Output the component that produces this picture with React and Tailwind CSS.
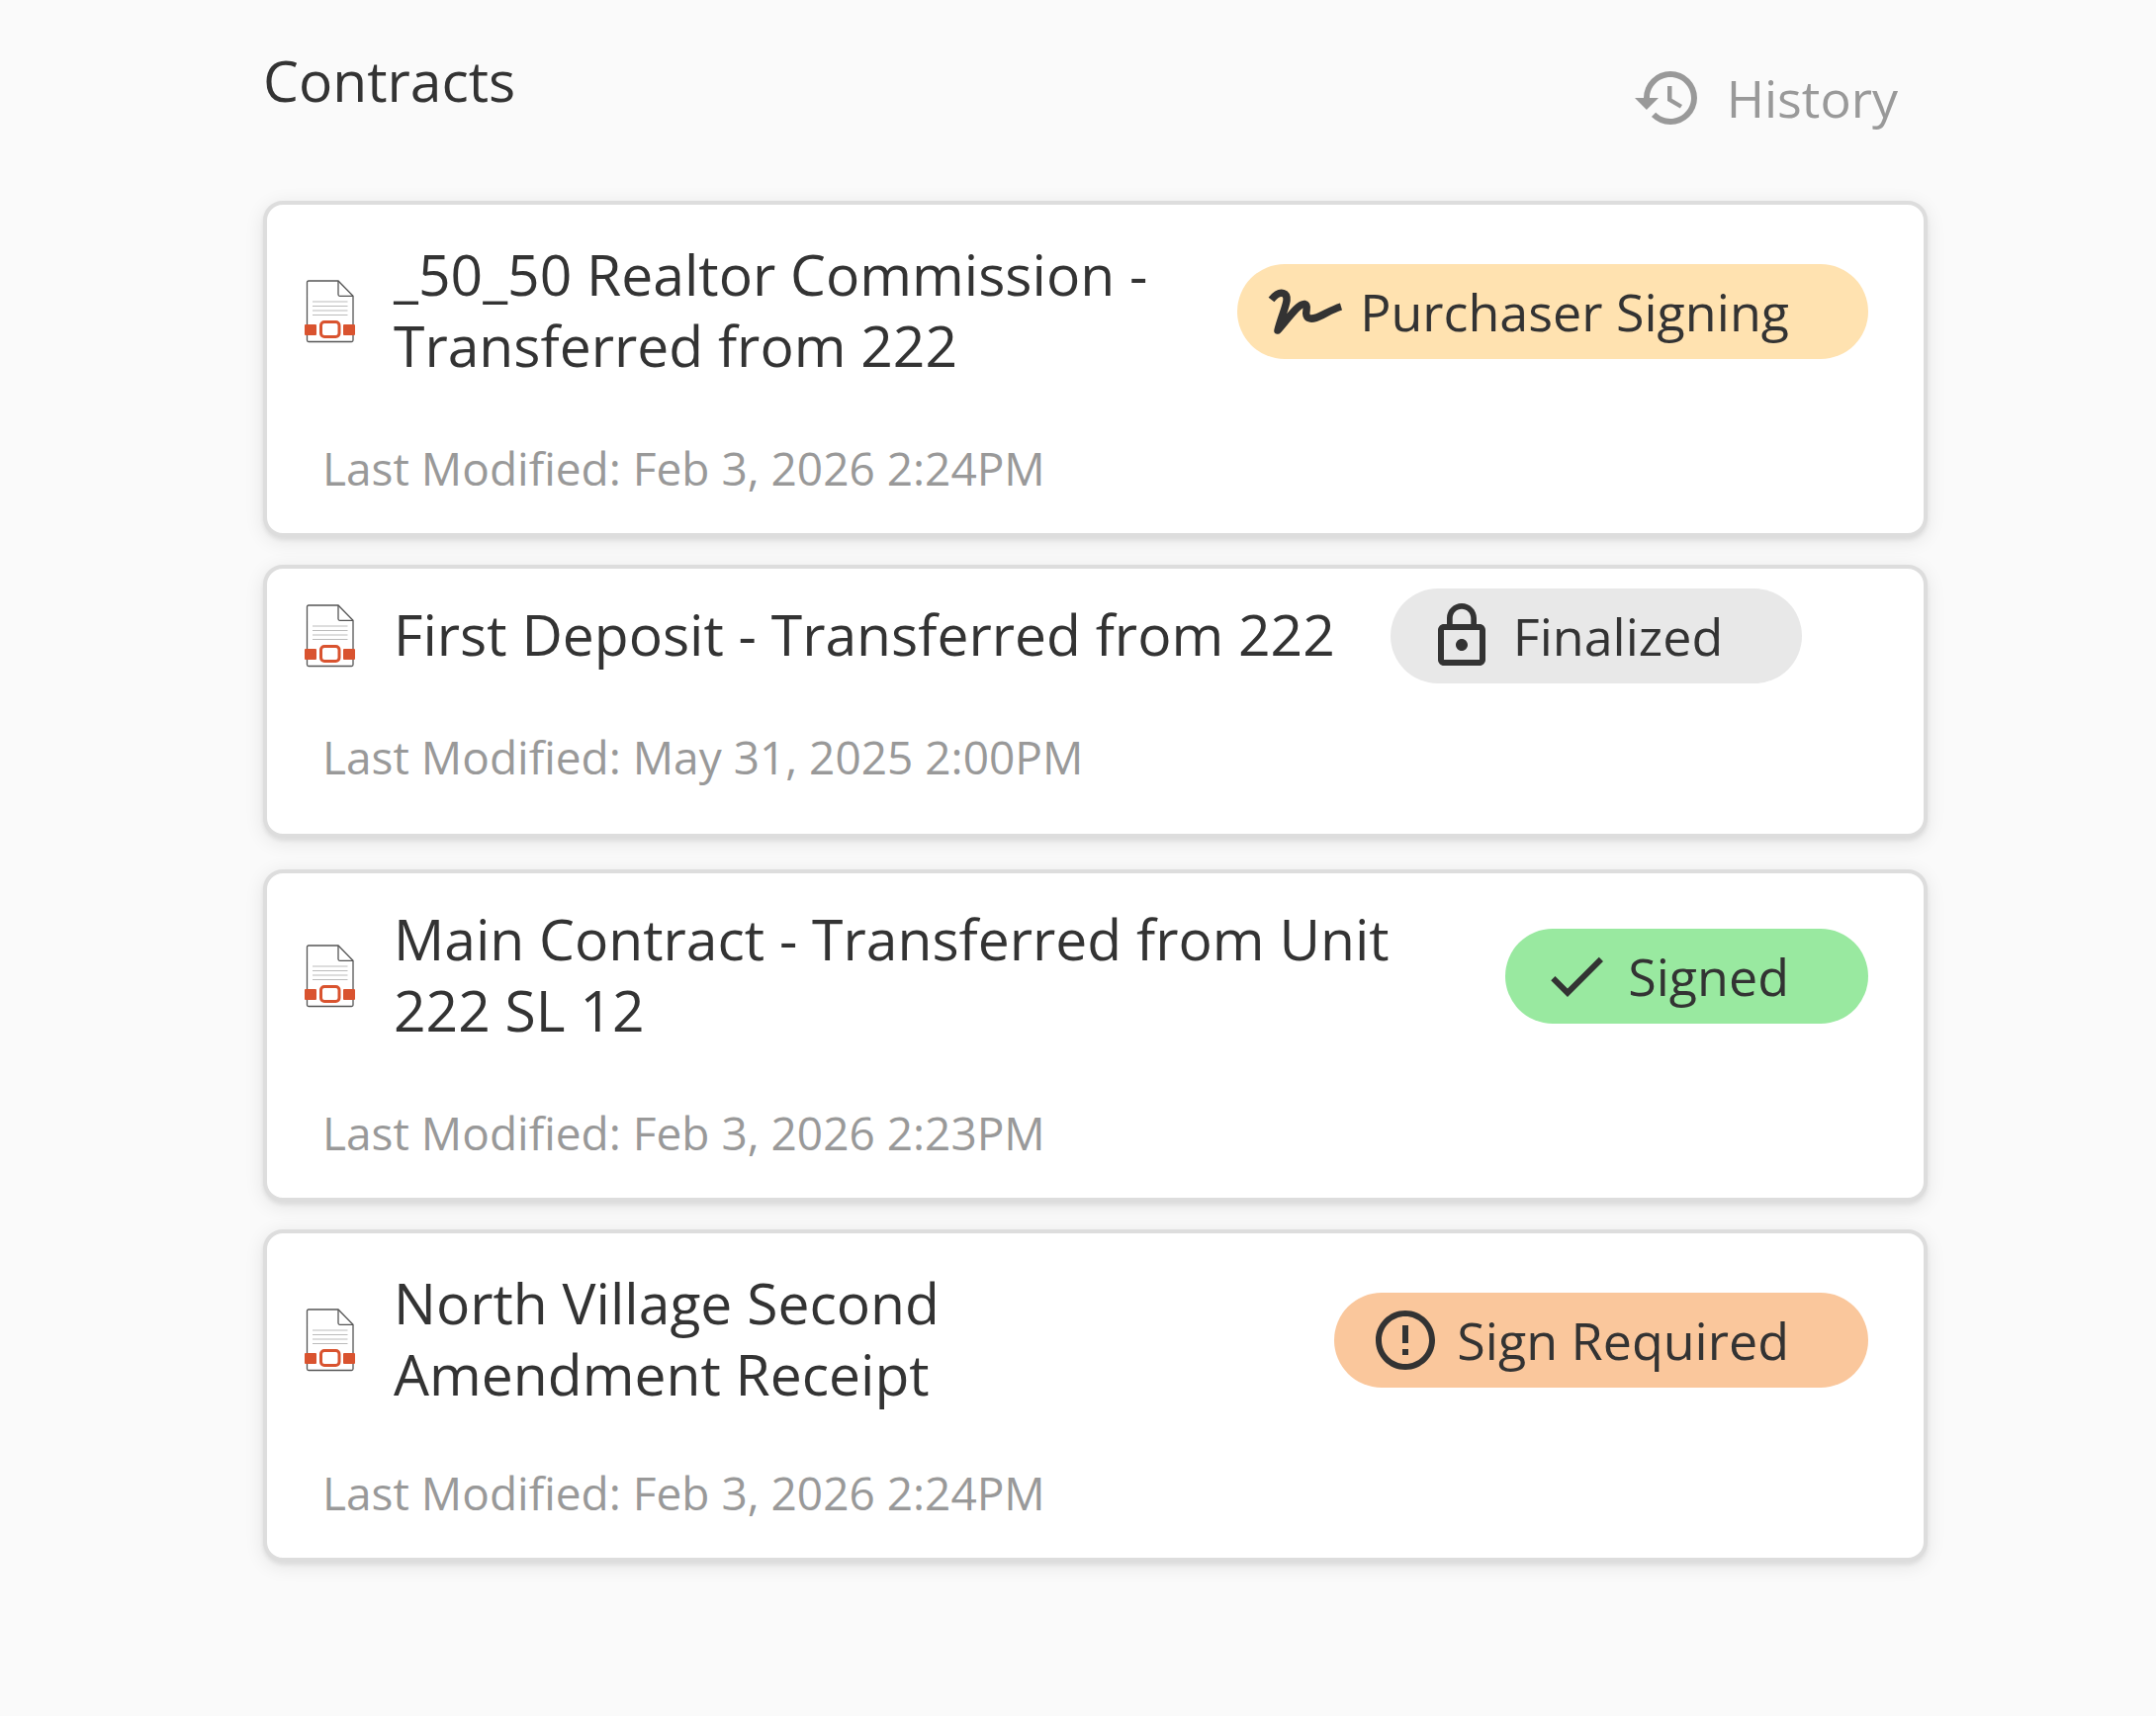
import { MdCheck, MdErrorOutline, MdHistory, MdLockOutline } from 'react-icons/md';

function SignatureIcon({ className = '' }) {
    return (
        <svg className={className} viewBox="0 0 72 72" fill="none" stroke="currentColor" strokeWidth="7.5" strokeLinejoin="round" overflow="visible">
            <path d="M-1.500 24C3 18.500 7 16.500 10.500 17.500C19.500 20.500 9.500 36 5 55C14 45 26 27.500 32 28.500C38 30 30 39 36 42.500C43 46 55 35 69 31" />
        </svg>
    );
}

function FileIcon({ className = '' }) {
    return (
        <svg className={className} viewBox="0 0 52 64" fill="none">
            <path d="M34 1H4Q2.500 1 2.500 2.500V61Q2.500 62.500 4 62.500H47.500Q49 62.500 49 61V16.300Z" fill="#fff" stroke="#555" strokeWidth="1.300" />
            <path d="M34 1V14.800Q34 16.300 35.500 16.300H49" stroke="#555" strokeWidth="1.300" />
            <path d="M8 22H43.500M8 26.500H43.500M8 31H43.500M8 35.500H43.500" stroke="#bbb" strokeWidth="1.200" />
            <rect x="0" y="45" width="12" height="11" rx="1" fill="#d9532f" />
            <rect x="39" y="45" width="12" height="11" rx="1" fill="#d9532f" />
            <rect x="16.500" y="42.500" width="18.500" height="15" rx="3.500" fill="#fff" stroke="#d9532f" strokeWidth="3" />
        </svg>
    );
}

const statuses = {
    signing: { label: 'Purchaser Signing', icon: SignatureIcon, color: 'bg-[#ffe2b0]' },
    finalized: { label: 'Finalized', icon: MdLockOutline, color: 'bg-[#e8e8e8]' },
    signed: { label: 'Signed', icon: MdCheck, color: 'bg-[#99e9a0]' },
    required: { label: 'Sign Required', icon: MdErrorOutline, color: 'bg-[#fac79c]' },
};

const contracts = [
    {
        title: '_50_50 Realtor Commission - Transferred from 222',
        status: 'signing',
        modified: 'Feb 3, 2026 2:24PM',
        card: 'mb-7 pt-6 pb-9',
        date: 'mt-11',
    },
    {
        title: 'First Deposit - Transferred from 222',
        status: 'finalized',
        modified: 'May 31, 2025 2:00PM',
        card: 'mb-8 pt-5 pb-12',
        date: 'mt-11',
    },
    {
        title: 'Main Contract - Transferred from Unit 222 SL 12',
        status: 'signed',
        modified: 'Feb 3, 2026 2:23PM',
        card: 'mb-7 pt-5 pb-9',
        date: 'mt-11',
    },
    {
        title: 'North Village Second Amendment Receipt',
        status: 'required',
        modified: 'Feb 3, 2026 2:24PM',
        card: 'pt-6 pb-9',
        date: 'mt-10',
    },
];

function StatusBadge({ status }) {
    const { label, icon: Icon, color } = statuses[status];

    return (
        <span className={`flex h-24 shrink-0 items-center gap-4 rounded-full pr-20 pl-9 text-[52px] whitespace-nowrap ${color}`}>
            <Icon className="size-18 shrink-0" aria-hidden="true" />
            {label}
        </span>
    );
}

function ContractCard({ contract }) {
    return (
        <li className={`rounded-[20px] border-4 border-[#ddd] bg-white shadow-[0_3px_4px_rgba(0,0,0,0.07),0_4px_20px_rgba(0,0,0,0.09)] ${contract.card}`}>
            <div className="flex items-center pr-14 pl-[38px]">
                <FileIcon className="h-16 w-[52px] shrink-0" />
                <h2 className="mr-14 ml-[38px] pt-2.5 pb-3.5 text-[57px] leading-[72px]">
                    {contract.title}
                </h2>
                <StatusBadge status={contract.status} />
            </div>
            <p className={`pl-14 text-[46px] leading-15 text-[#999] ${contract.date}`}>
                Last Modified: {contract.modified}
            </p>
        </li>
    );
}

export default function App() {
    return (
        <main className='min-h-screen bg-[#fafafa] pt-[45px] pr-[231px] pb-16 pl-[266px] font-["Open_Sans",sans-serif] text-[#333]'>
            <header className="mb-17 flex items-start justify-between">
                <h1 className="text-[57px] leading-[72px]">Contracts</h1>
                <button type="button" className="mt-[18px] mr-[30px] flex items-center gap-6 text-[52px] leading-[72px] text-[#999]">
                    <MdHistory className="size-18" aria-hidden="true" />
                    History
                </button>
            </header>

            <ul>
                {contracts.map((contract) => (
                    <ContractCard key={contract.title} contract={contract} />
                ))}
            </ul>
        </main>
    );
}
